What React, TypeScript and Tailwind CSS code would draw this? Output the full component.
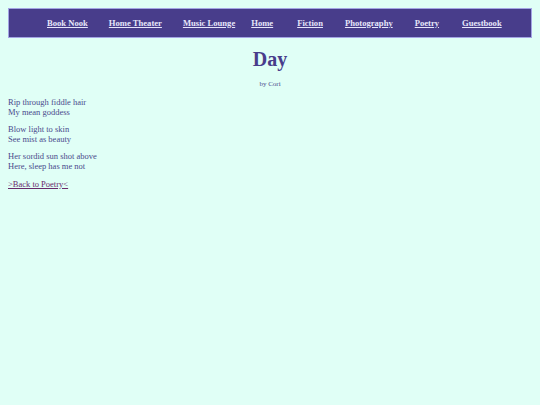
import React from 'react';

const links = [
  { label: 'Book Nook', ml: 'ml-0' },
  { label: 'Home Theater', ml: 'ml-[21px]' },
  { label: 'Music Lounge', ml: 'ml-[21px]' },
  { label: 'Home', ml: 'ml-[16px]' },
  { label: 'Fiction', ml: 'ml-[24px]' },
  { label: 'Photography', ml: 'ml-[22px]' },
  { label: 'Poetry', ml: 'ml-[22px]' },
  { label: 'Guestbook', ml: 'ml-[23px]' },
];

const stanzas = [
  ['Rip through fiddle hair', 'My mean goddess'],
  ['Blow light to skin', 'See mist as beauty'],
  ['Her sordid sun shot above', 'Here, sleep has me not'],
];

export default function App() {
  return (
    <div
      className="min-h-[405px] bg-[#e0fff6] p-2 text-[#4a4a8c]"
      style={{ fontFamily: '"Liberation Serif", "Times New Roman", serif' }}
    >
      {/* nav bar */}
      <div className="flex h-[30px] items-center justify-start border border-[#a4a4e4] bg-[#483d8b] pl-[38px]">
        {links.map((l) => (
          <a
            key={l.label}
            href="#"
            className={`${l.ml} whitespace-nowrap text-[8.6px] font-bold text-[#e6e6fa] underline`}
          >
            {l.label}
          </a>
        ))}
      </div>

      <h1 className="mt-[9px] text-center text-[20px] font-bold leading-[24px] text-[#483d8b]">Day</h1>
      <p className="mt-[9px] text-center text-[7px] leading-[8px]">by Cori</p>

      <div className="mt-[9px] text-[8.5px] leading-[10px]">
        {stanzas.map((s, i) => (
          <p key={i} className="mb-[7px]">
            {s[0]}
            <br />
            {s[1]}
          </p>
        ))}
        <a href="#" className="mt-[1px] inline-block text-[#6a2a6a] underline">
          &gt;Back to Poetry&lt;
        </a>
      </div>
    </div>
  );
}
